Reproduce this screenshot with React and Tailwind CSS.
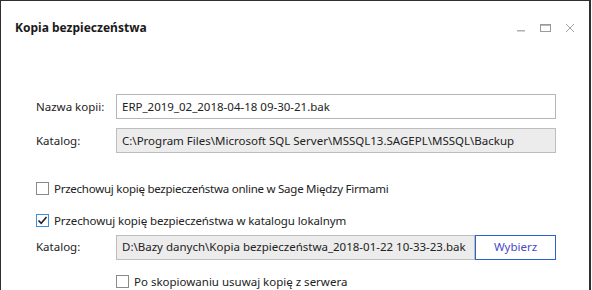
import React from 'react';

const font = { fontFamily: '"Noto Sans", "Open Sans", sans-serif' };

const Checkbox = ({ checked }) => (
    <span
        className={
            'flex h-[13px] w-[13px] shrink-0 items-center justify-center border bg-white ' +
            (checked ? 'border-[#3d8ee0]' : 'border-[#8a8a8a]')
        }
    >
        {checked && (
            <svg width="11" height="11" viewBox="0 0 11 11">
                <path d="M1.5 5.5 L4.2 8.3 L9.5 2" fill="none" stroke="#222" strokeWidth="1.6" />
            </svg>
        )}
    </span>
);

const Field = ({ label, value, disabled }) => (
    <div className="flex items-center">
        <span className="w-[80px] shrink-0 text-[11.5px] text-[#222]">{label}</span>
        <div
            className={
                'flex h-[25px] flex-1 items-center whitespace-nowrap border px-[5px] text-[11.5px] text-[#222] ' +
                (disabled ? 'border-[#bdbdbd] bg-[#ececec]' : 'border-[#b5b5b5] bg-white')
            }
        >
            {value}
        </div>
    </div>
);

const App = () => {
    return (
        <div className="h-[290px] w-[592px] overflow-hidden bg-white" style={font}>
            <div className="h-[300px] w-[591px] border-l border-t border-r-2 border-[#2f2f2f]">
                <div className="flex h-[52px] items-center justify-between pl-[14px] pr-[14px] pt-[2px]">
                    <h1 className="text-[12px] font-bold text-[#1a1a1a]">Kopia bezpieczeństwa</h1>
                    <div className="flex items-center gap-[14px]">
                        <svg width="10" height="10" viewBox="0 0 10 10">
                            <rect x="1" y="7" width="8" height="1.5" fill="#b0b0b0" />
                        </svg>
                        <svg width="11" height="10" viewBox="0 0 11 10">
                            <rect x="0.5" y="1.5" width="10" height="7" fill="none" stroke="#9a9a9a" />
                            <rect x="0.5" y="1.5" width="10" height="1.2" fill="#9a9a9a" />
                        </svg>
                        <svg width="10" height="10" viewBox="0 0 10 10">
                            <path d="M1 1 L9 9 M9 1 L1 9" stroke="#a0a0a0" strokeWidth="1" />
                        </svg>
                    </div>
                </div>
                <div className="flex flex-col pl-[35px] pr-[33px] pt-[41px]">
                    <Field label="Nazwa kopii:" value="ERP_2019_02_2018-04-18 09-30-21.bak" />
                    <div className="mt-[9px]">
                        <Field
                            label="Katalog:"
                            value="C:\Program Files\Microsoft SQL Server\MSSQL13.SAGEPL\MSSQL\Backup"
                            disabled
                        />
                    </div>
                    <label className="mt-[27px] flex items-center gap-[5px] whitespace-nowrap text-[11.5px] tracking-[-0.25px] text-[#222]">
                        <Checkbox />
                        Przechowuj kopię bezpieczeństwa online w Sage Między Firmami
                    </label>
                    <label className="mt-[15px] flex items-center gap-[5px] whitespace-nowrap text-[11.5px] tracking-[-0.1px] text-[#222]">
                        <Checkbox checked />
                        Przechowuj kopię bezpieczeństwa w katalogu lokalnym
                    </label>
                    <div className="mt-[5px] flex items-center">
                        <span className="w-[80px] shrink-0 text-[11.5px] text-[#222]">Katalog:</span>
                        <div className="flex h-[25px] flex-1 items-center whitespace-nowrap border border-[#bdbdbd] bg-[#ececec] px-[5px] text-[11.5px] text-[#222]">
                            D:\Bazy danych\Kopia bezpieczeństwa_2018-01-22 10-33-23.bak
                        </div>
                        <button className="h-[25px] w-[81px] shrink-0 border border-[#2a62d0] bg-white text-[11.5px] text-[#4a4ac8]">
                            Wybierz
                        </button>
                    </div>
                    <label className="ml-[80px] mt-[13px] flex items-center gap-[5px] whitespace-nowrap text-[11.5px] text-[#222]">
                        <Checkbox />
                        Po skopiowaniu usuwaj kopię z serwera
                    </label>
                </div>
            </div>
        </div>
    );
};

export default App;
